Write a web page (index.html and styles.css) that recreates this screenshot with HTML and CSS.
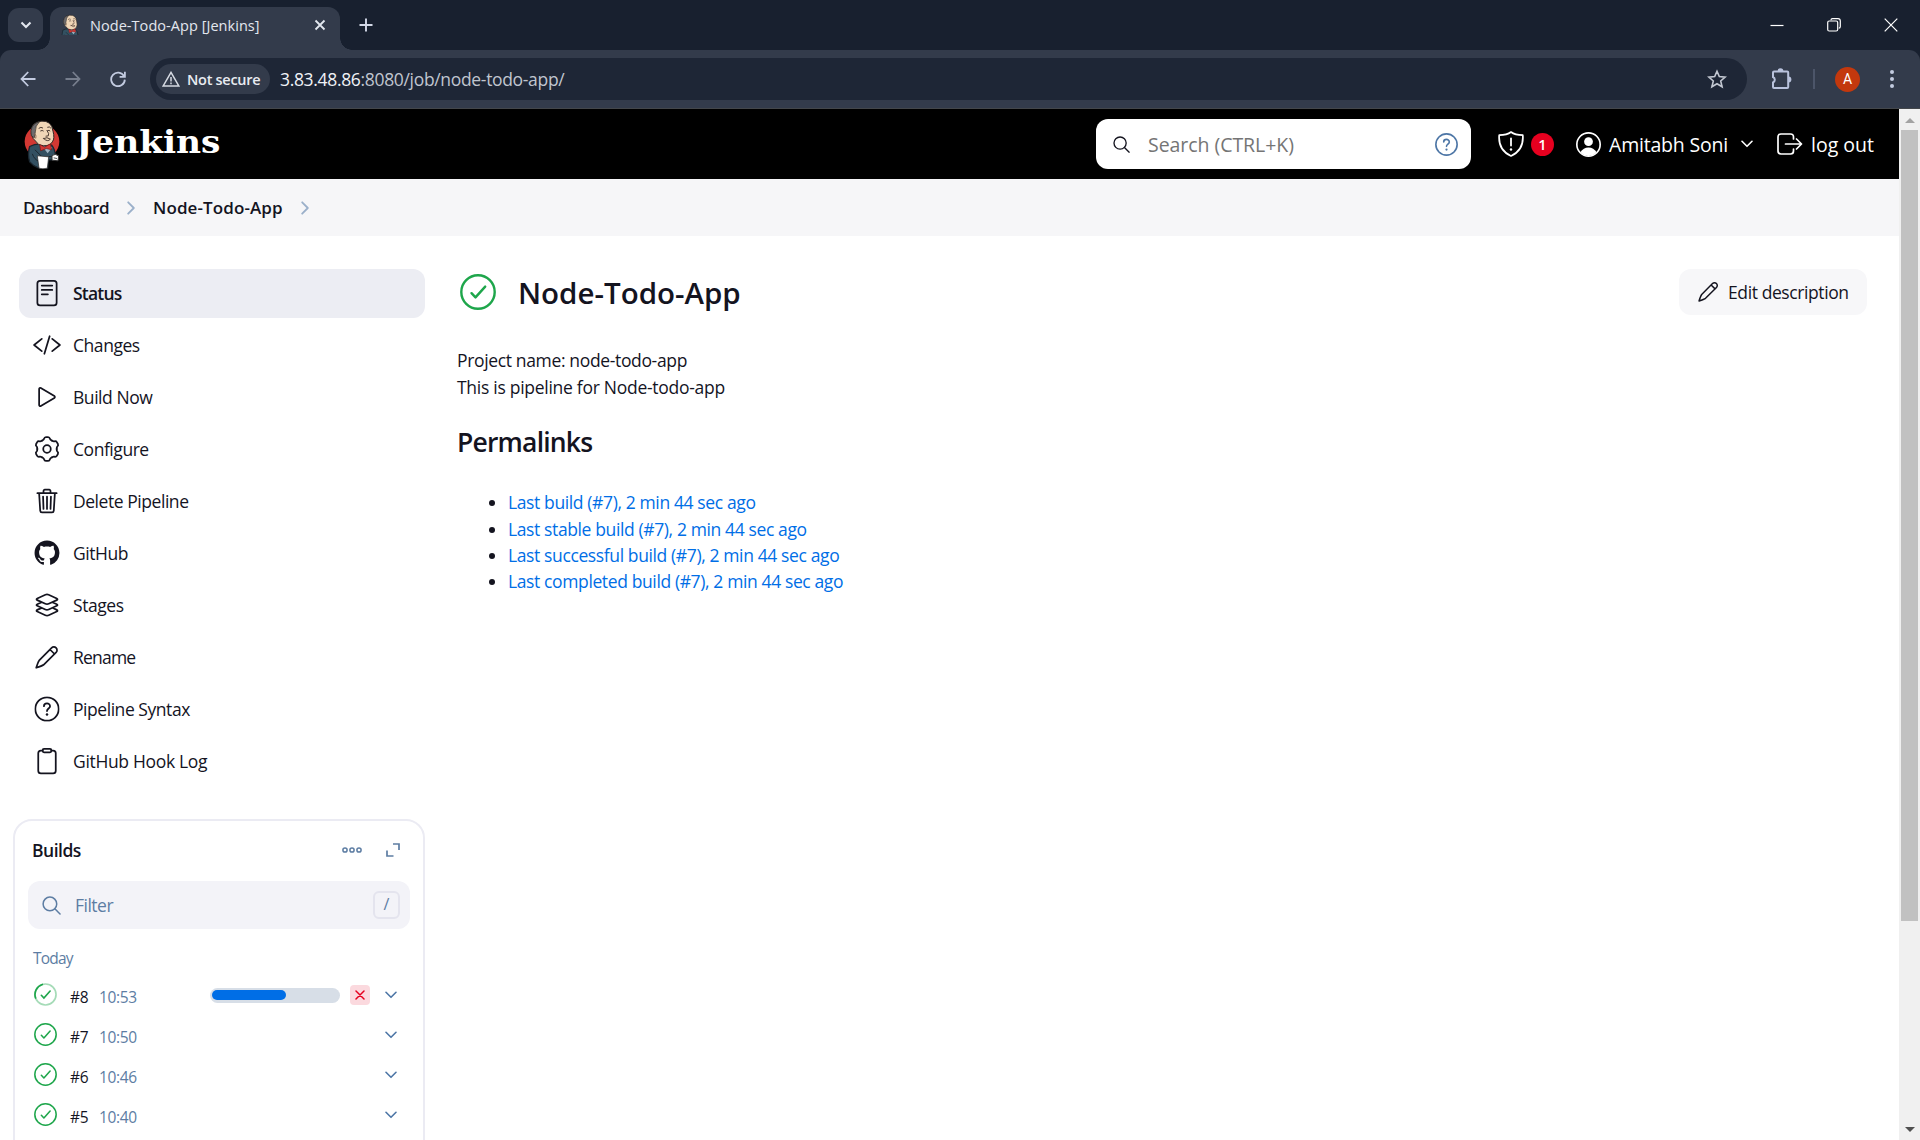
FILE: index.html
```html
<!DOCTYPE html>
<html lang="en">
<head>
<meta charset="utf-8">
<title>Node-Todo-App [Jenkins]</title>
<link rel="stylesheet" href="styles.css">
</head>
<body>
<svg class="defs" width="0" height="0" aria-hidden="true">
  <symbol id="butler" viewBox="0 0 114 152">
    <ellipse class="halo" cx="57" cy="67" rx="52" ry="50"/>
    <path d="M20 82 Q34 74 50 74 L86 78 Q96 90 97 110 L94 122 76 122 74 146 46 146 Q30 140 20 128 Q13 104 20 82z" fill="#335061" stroke="#1b2730" stroke-width="4"/>
    <path d="M25 44 Q22 10 54 6 Q86 3 90 36 Q96 58 88 68 Q82 80 62 80 Q44 79 38 66 Q30 62 25 44z" fill="#f0d6b7" stroke="#2b2523" stroke-width="3"/>
    <path d="M25 50 Q18 16 50 7 Q36 20 37 38 L34 56z" fill="#6d6b6d" stroke="#2b2523" stroke-width="2"/>
    <path d="M48 27q6-5 11-1M74 24q6-3 9 2M53 35q5-3 8 0M74 34q5-2 7 1M72 34q8 10 4 16l-7 1M62 58q10-6 20 2-8 10-20-2z" fill="none" stroke="#4a3a32" stroke-width="3" stroke-linecap="round"/>
    <path d="M33 44q8 0 5 14" fill="none" stroke="#8a6d58" stroke-width="3"/>
    <path d="M58 82l16 20 14-18z" fill="#9fb4c4"/>
    <path d="M50 76l15 8 17-10 4 18-16-4-17 7z" fill="#d33833" stroke="#7c1512" stroke-width="2"/>
    <path d="M36 92l20 20h34M28 104q6 18 20 22" fill="none" stroke="#1b2730" stroke-width="3"/>
    <path d="M43 110l34 3-4 34q-14 4-25 0z" fill="#fff" stroke="#222" stroke-width="2"/>
    <path d="M87 109q10-7 20 1l-2 15-18-2z" fill="#fff" stroke="#333" stroke-width="3"/>
    <path d="M92 116l10 2" stroke="#555" stroke-width="3"/>
  </symbol>
  <symbol id="search" viewBox="0 0 24 24"><g fill="none" stroke="currentColor" stroke-width="1.9" stroke-linecap="round"><circle cx="10" cy="10" r="8.6"/><path d="M16.2 16.2 22.8 22.8"/></g></symbol>
  <symbol id="pencil" viewBox="0 0 24 24"><g fill="none" stroke="currentColor" stroke-width="1.7" stroke-linejoin="round" stroke-linecap="round"><path d="M16.6 2.9 4.2 15.4Q3 17 1.2 22.8 7 21 8.6 19.8L21.1 7.4a3.15 3.15 0 0 0-4.5-4.5zM15 4.5 19.5 9"/></g></symbol>
  <symbol id="help" viewBox="0 0 24 24"><g fill="none" stroke="currentColor" stroke-width="1.7" stroke-linecap="round"><circle cx="12" cy="12" r="11.1"/><path d="M9.100 9.300c0-3.500 5.800-3.500 5.800 0 0 2.200-2.900 2.300-2.900 4.600"/></g><circle cx="12" cy="17.3" r="1.2" fill="currentColor"/></symbol>
  <symbol id="check" viewBox="0 0 36 36"><g fill="none" stroke="currentColor" stroke-width="2.4" stroke-linecap="round" stroke-linejoin="round"><circle cx="18" cy="18" r="16.7"/><path d="M11.5 19.2l4 4.2L25.2 12.6"/></g></symbol>
  <symbol id="chevron" viewBox="0 0 12 8"><path d="M1 1.3l5 5 5-5" fill="none" stroke="currentColor" stroke-width="1.6" stroke-linecap="round" stroke-linejoin="round"/></symbol>
  <symbol id="crumb" viewBox="0 0 8 16"><path d="M1.2 2.300 6.800 8l-5.600 5.700" fill="none" stroke="currentColor" stroke-width="1.8" stroke-linecap="round" stroke-linejoin="round"/></symbol>
</svg>

<div class="titlebar">
  <button class="tab-search"><svg width="12" height="8" viewBox="0 0 12 8"><path d="M1.500 1.500 6 6l4.500-4.500" fill="none" stroke="currentColor" stroke-width="2.100"/></svg></button>
  <div class="tab">
    <svg class="favicon" viewBox="14 0 90 106"><use href="#butler" width="114" height="152"/></svg>
    <span class="tab-title">Node-Todo-App [Jenkins]</span>
    <svg class="tab-close" viewBox="0 0 12 12"><path d="M1.5 1.5l9 9M10.500 1.500l-9 9" stroke="currentColor" stroke-width="1.8"/></svg>
  </div>
  <svg class="tab-new" viewBox="0 0 14 14"><path d="M7 .5v13M.5 7h13" stroke="currentColor" stroke-width="1.9"/></svg>
  <div class="window-controls">
    <svg width="14" height="14"><path d="M.5 7.500h13" stroke="#fff" stroke-width="1.200"/></svg>
    <svg width="14" height="14"><path d="M4 2.200V2q0-1.300 1.500-1.300h5.500q2.300 0 2.300 2.300v5.500q0 1.700-1.500 1.700" fill="none" stroke="#fff" stroke-width="1.200"/><rect x=".7" y="3" width="10" height="10" rx="1.500" fill="none" stroke="#fff" stroke-width="1.200"/></svg>
    <svg width="14" height="14"><path d="M.7.7l12.600 12.600M13.300.7.7 13.300" stroke="#fff" stroke-width="1.200"/></svg>
  </div>
</div>

<div class="toolbar-wrap">
<div class="toolbar">
  <svg class="nav" viewBox="0 0 16 16"><path d="M8.200 1 1.500 8l6.700 7M1.500 8h14" /></svg>
  <svg class="nav nav-off" viewBox="0 0 16 16"><path d="M7.800 1l6.700 7-6.700 7M14.500 8H.500"/></svg>
  <svg class="nav" viewBox="0 0 16 16"><path d="M14 5.200A6.800 6.800 0 1 0 14.800 8.600M14.900.8v5H9.600"/></svg>
  <div class="omnibox">
    <div class="security">
      <svg width="18" height="16" viewBox="0 0 18 16"><path d="M9 1.400 16.800 15H1.200z" fill="none" stroke="#d6dae2" stroke-width="1.500"/><path d="M9 6v4.500M9 11.600v1.600" stroke="#d6dae2" stroke-width="1.500"/></svg>
      <span>Not secure</span>
    </div>
    <span class="url"><b>3.83.48.86</b>:8080/job/node-todo-app/</span>
    <svg class="star" viewBox="0 0 20 20"><path d="M10 2.200l2.300 5.400 5.900.5-4.500 3.900 1.400 5.800L10 14.700l-5.100 3.100 1.400-5.800L1.800 8.100l5.900-.5z" fill="none" stroke="#c3c8d2" stroke-width="1.600"/></svg>
  </div>
  <svg class="puzzle" viewBox="0 0 22 22"><path d="M2 4.500q0-1 1-1H16.200q1 0 1 1V19q0 1-1 1H3q-1 0-1-1v-4.500a3 3 0 0 0 0-5.500z" fill="none" stroke="#b9c2dc" stroke-width="2"/><path d="M6.600 3.200a2.900 2.900 0 0 1 5.800 0zM17.500 8.600a2.900 2.900 0 0 1 0 5.800z" fill="#b9c2dc"/></svg>
  <span class="divider"></span>
  <span class="avatar">A</span>
  <svg class="kebab" viewBox="0 0 4 20" fill="#c3cbe0"><circle cx="2" cy="3" r="2"/><circle cx="2" cy="10" r="2"/><circle cx="2" cy="17" r="2"/></svg>
</div>
</div>

<div class="viewport">
<div class="page">
  <header class="header">
    <svg class="logo"><use href="#butler"/></svg>
    <div class="brand"><span class="wordmark">Jenkins</span></div>
    <div class="search">
      <svg class="search-icon"><use href="#search"/></svg>
      <span class="search-hint">Search (CTRL+K)</span>
      <svg class="search-help"><use href="#help"/></svg>
    </div>
    <svg class="shield" viewBox="0 0 26 26"><path d="M13 1Q9 4 1.200 4.200 0 19 13 25 26 19 24.800 4.200 17 4 13 1z" fill="none" stroke="#fff" stroke-width="1.700" stroke-linejoin="round"/><path d="M13 7.500v7" stroke="#fff" stroke-width="1.800" stroke-linecap="round"/><circle cx="13" cy="18.500" r="1.200" fill="#fff"/></svg>
    <span class="badge">1</span>
    <svg class="user" viewBox="0 0 24 24"><circle cx="12" cy="12" r="11.200" fill="none" stroke="#fff" stroke-width="1.600"/><circle cx="12" cy="9.300" r="4.200" fill="#fff"/><path d="M4.300 19.300Q7 14.800 12 14.800t7.700 4.500Q17 23 12 23t-7.700-3.700z" fill="#fff"/></svg>
    <span class="username">Amitabh Soni</span>
    <svg class="user-chevron"><use href="#chevron"/></svg>
    <svg class="exit" viewBox="0 0 26 22"><path d="M16.500 6V4q0-3-3-3H4Q1 1 1 4v14q0 3 3 3h9.500q3 0 3-3v-2M8.500 11H24M19.500 6l5 5-5 5" fill="none" stroke="#fff" stroke-width="1.700" stroke-linecap="round" stroke-linejoin="round"/></svg>
    <span class="logout">log out</span>
  </header>

  <nav class="breadcrumbs">
    <span class="crumb-1">Dashboard</span><svg><use href="#crumb"/></svg>
    <span class="crumb-2">Node-Todo-App</span><svg><use href="#crumb"/></svg>
  </nav>

  <div class="body">
    <aside class="side">
      <div class="tasks">
        <a class="task active"><svg viewBox="0 0 512 512"><rect x="80" y="32" width="352" height="448" rx="48"/><path d="M160 120h192M160 200h192M160 280h112"/></svg><span>Status</span></a>
        <a class="task"><svg viewBox="0 0 512 512"><path d="M160 368 20 256l140-112M352 368l140-112-140-112M304 96l-96 320"/></svg><span>Changes</span></a>
        <a class="task"><svg viewBox="0 0 512 512"><path d="M112 111v290c0 17.440 17 28.520 31 20.160l247.900-148.370c12.120-7.250 12.120-26.330 0-33.580L143 90.840c-14-8.360-31 2.720-31 20.160z"/></svg><span>Build Now</span></a>
        <a class="task"><svg class="gear" viewBox="-1 -1 26 26"><circle cx="12" cy="12" r="3.500"/><path id="tooth" d="M7.500 4.200C8.300 3.750 8.900 3.500 9.200 2.600Q9.600.9 11 .9h2Q14.400.9 14.800 2.600C15.100 3.500 15.700 3.750 16.500 4.200"/><use href="#tooth" transform="rotate(60 12 12)"/><use href="#tooth" transform="rotate(120 12 12)"/><use href="#tooth" transform="rotate(180 12 12)"/><use href="#tooth" transform="rotate(240 12 12)"/><use href="#tooth" transform="rotate(300 12 12)"/></svg><span>Configure</span></a>
        <a class="task"><svg viewBox="0 0 512 512"><path d="M112 112l20 320c.95 18.490 14.400 32 32 32h184c17.670 0 30.870-13.510 32-32l20-320M80 112h352M192 112V72a23.930 23.930 0 0 1 24-24h80a23.930 23.930 0 0 1 24 24v40M256 176v224M184 176l8 224M328 176l-8 224"/></svg><span>Delete Pipeline</span></a>
        <a class="task"><svg class="github" viewBox="-1 -1 18 18"><path d="M8 0C3.580 0 0 3.580 0 8c0 3.540 2.290 6.530 5.470 7.590.4.070.55-.17.55-.38 0-.19-.01-.82-.01-1.490-2.010.37-2.530-.49-2.690-.94-.09-.23-.48-.94-.82-1.130-.28-.15-.68-.52-.01-.53.63-.01 1.080.58 1.230.82.720 1.210 1.870.87 2.330.66.070-.52.280-.87.510-1.070-1.780-.2-3.640-.89-3.640-3.950 0-.87.310-1.590.82-2.150-.08-.2-.36-1.020.08-2.120 0 0 .67-.21 2.200.82.640-.18 1.320-.27 2-.27s1.360.09 2 .27c1.530-1.040 2.200-.82 2.200-.82.440 1.100.160 1.920.080 2.120.51.56.82 1.270.82 2.150 0 3.070-1.870 3.750-3.650 3.950.29.25.54.73.54 1.480 0 1.070-.01 1.930-.01 2.200 0 .21.15.46.55.38A8.010 8.010 0 0 0 16 8c0-4.420-3.580-8-8-8z"/></svg><span>GitHub</span></a>
        <a class="task"><svg viewBox="0 0 512 512"><path d="M434.800 137.650l-149.360-68.100c-16.190-7.400-42.690-7.400-58.880 0L77.300 137.650c-17.600 8-17.600 21.090 0 29.090l148 67.500c16.890 7.700 44.690 7.700 61.580 0l148-67.500c17.520-8 17.520-21.100-.08-29.090zM160 308.520l-82.700 37.110c-17.600 8-17.600 21.100 0 29.100l148 67.500c16.890 7.690 44.690 7.690 61.580 0l148-67.500c17.600-8 17.600-21.100 0-29.100l-79.940-38.470M160 204.480l-82.800 37.160c-17.600 8-17.600 21.100 0 29.100l148 67.490c16.890 7.700 44.690 7.700 61.580 0l148-67.490c17.700-8 17.700-21.100.1-29.100L352 204.480"/></svg><span>Stages</span></a>
        <a class="task"><svg class="plain" viewBox="-2 -2 28 28"><use href="#pencil" width="24" height="24"/></svg><span class="tight">Rename</span></a>
        <a class="task"><svg class="plain" viewBox="-1.300 -1.300 26.600 26.600"><use href="#help" width="24" height="24"/></svg><span>Pipeline Syntax</span></a>
        <a class="task"><svg viewBox="0 0 512 512"><path d="M336 64h32a48 48 0 0 1 48 48v320a48 48 0 0 1-48 48H144a48 48 0 0 1-48-48V112a48 48 0 0 1 48-48h32"/><rect x="176" y="32" width="160" height="64" rx="26"/></svg><span class="loose">GitHub Hook Log</span></a>
      </div>

      <section class="builds">
        <div class="builds-head">
          <h2>Builds</h2>
          <svg class="dots" viewBox="0 0 20 6"><g fill="none" stroke="currentColor" stroke-width="1.500"><circle cx="3" cy="3" r="2.100"/><circle cx="10" cy="3" r="2.100"/><circle cx="17" cy="3" r="2.100"/></g></svg>
          <svg class="expand" viewBox="0 0 14 14"><path d="M7 1h6v6M1 7.500V13h6.500" fill="none" stroke="currentColor" stroke-width="1.700"/></svg>
        </div>
        <div class="filter">
          <svg><use href="#search"/></svg>
          <span>Filter</span>
          <kbd>/</kbd>
        </div>
        <div class="day">Today</div>
        <div class="build">
          <svg class="state" viewBox="0 0 36 36"><g fill="none" stroke="currentColor" stroke-width="2.600" stroke-linecap="round"><circle cx="18" cy="18" r="16.500" opacity=".4"/><path d="M2.500 23.500A16.500 16.500 0 0 1 13 2.300"/><path d="M11.500 19.200l4 4.200L25.200 12.600"/></g></svg>
          <span class="num">#8</span><span class="time">10:53</span>
          <span class="progress"><i></i></span>
          <span class="stop"><svg viewBox="0 0 10 10"><path d="M1 1l8 8M9 1 1 9" stroke="#e6001f" stroke-width="1.500" stroke-linecap="round"/></svg></span>
          <svg class="more"><use href="#chevron"/></svg>
        </div>
        <div class="build"><svg class="state"><use href="#check"/></svg><span class="num">#7</span><span class="time">10:50</span><svg class="more"><use href="#chevron"/></svg></div>
        <div class="build"><svg class="state"><use href="#check"/></svg><span class="num">#6</span><span class="time">10:46</span><svg class="more"><use href="#chevron"/></svg></div>
        <div class="build"><svg class="state"><use href="#check"/></svg><span class="num">#5</span><span class="time">10:40</span><svg class="more"><use href="#chevron"/></svg></div>
      </section>
    </aside>

    <main class="main">
      <div class="main-head">
        <svg class="status-icon"><use href="#check"/></svg>
        <h1>Node-Todo-App</h1>
        <button class="edit"><svg><use href="#pencil"/></svg><span>Edit description</span></button>
      </div>
      <p class="desc"><span class="tight">Project name: node-todo-app</span><br>This is pipeline for Node-todo-app</p>
      <h2 class="permalinks">Permalinks</h2>
      <ul class="links">
        <li><a>Last build (#7), 2 min 44 sec ago</a></li>
        <li><a>Last stable build (#7), 2 min 44 sec ago</a></li>
        <li><a>Last successful build (#7), 2 min 44 sec ago</a></li>
        <li><a>Last completed build (#7), 2 min 44 sec ago</a></li>
      </ul>
    </main>
  </div>
</div>
<div class="scrollbar">
  <svg class="up" viewBox="0 0 10 5"><path d="M0 5 5 0l5 5z" fill="#a3a3a3"/></svg>
  <div class="thumb"></div>
  <svg class="down" viewBox="0 0 10 5"><path d="M0 0l5 5 5-5z" fill="#505050"/></svg>
</div>
</div>
</body>
</html>
```
FILE: styles.css
```css
* { box-sizing: border-box; }
body {
  margin: 0;
  width: 1920px;
  height: 1140px;
  overflow: hidden;
  display: flex;
  flex-direction: column;
  background: #fff;
  color: #14141f;
  font-family: "Open Sans", "Noto Sans", sans-serif;
  font-size: 17.5px;
  white-space: nowrap;
}
svg { display: block; flex: none; }
.defs { position: absolute; }
h1, h2, p, ul { margin: 0; padding: 0; }
button { border: 0; padding: 0; font: inherit; color: inherit; }

/* Browser chrome */
.titlebar { height: 50px; flex: none; background: #18202f; display: flex; align-items: flex-end; padding-left: 8px; }
.tab-search { width: 35px; height: 34px; margin-bottom: 8px; border-radius: 11px; background: #333b4b; color: #e3e7ef; display: grid; place-items: center; }
.tab {
  position: relative;
  width: 290px; height: 43px; margin-left: 7px; padding: 0 14px 7px 11px;
  display: flex; align-items: center;
  background: #333b4b; border-radius: 12px 12px 0 0; color: #e3e7ef;
}
.tab::before, .tab::after { content: ""; position: absolute; bottom: 0; width: 12px; height: 12px; }
.tab::before { left: -12px; background: radial-gradient(circle at 0 0, transparent 11.500px, #333b4b 12px); }
.tab::after { right: -12px; background: radial-gradient(circle at 100% 0, transparent 11.500px, #333b4b 12px); }
.halo { fill: var(--halo, #d33833); }
.favicon { --halo: transparent; width: 19px; height: 21px; margin-top: -2px; }
.tab-title { margin-left: 10px; font-size: 14.500px; letter-spacing: 0.05px; flex: 1; }
.tab-close { width: 12px; height: 12px; }
.tab-new { width: 14px; height: 14px; margin: 0 0 18px 19px; color: #d3d9e8; }
.window-controls { display: flex; gap: 43px; margin: 0 22px 18px auto; }

.toolbar-wrap { background: #18202f; flex: none; }
.toolbar { height: 59px; background: #333b4b; border-radius: 11px 11px 0 0; box-shadow: inset 0 -1px #44474b; display: flex; align-items: center; padding: 0 25px 1px 20px; }
.nav { width: 16px; height: 16px; margin-right: 29px; fill: none; stroke: #c3cbe0; stroke-width: 1.8; }
.nav-off { stroke: #777e8d; }
.omnibox { width: 1597px; height: 42px; margin-left: -5px; border-radius: 21px; background: #1e2636; display: flex; align-items: center; padding: 0 20px 0 6px; }
.security { width: 114px; height: 30px; border-radius: 15px; background: #333b4b; display: flex; align-items: center; gap: 7px; padding-left: 6px; color: #e8ebf1; font-size: 14.500px; font-weight: 600; letter-spacing: -0.28px; }
.url { margin-left: 10px; flex: 1; color: #c0c5cf; font-size: 17.500px; letter-spacing: -0.33px; }
.url b { font-weight: 400; color: #f0f2f6; }
.star { width: 20px; height: 20px; }
.puzzle { width: 22px; height: 22px; margin-left: 24px; }
.divider { width: 2px; height: 20px; margin-left: 20px; background: #4c5569; }
.avatar { width: 25px; height: 25px; margin-left: 20px; border-radius: 50%; background: #c3380d; color: #fff; font: 14px/25px Roboto, sans-serif; text-align: center; }
.kebab { width: 4px; height: 20px; margin-left: 30px; }

/* Page */
.viewport { flex: 1; min-height: 0; display: flex; }
.page { width: 1899px; overflow: hidden; }
.header { height: 70px; background: #000; color: #fff; display: flex; align-items: center; padding-left: 23px; font-size: 19.500px; }
.logo { width: 38px; height: 51px; }
.brand { width: 1020px; margin-left: 15px; padding-bottom: 4px; }
.wordmark { display: inline-block; font: bold 32px "DejaVu Serif", serif; transform: scaleX(1.075); transform-origin: 0 50%; }
.search { width: 375px; height: 50px; border-radius: 12px; background: #fff; display: flex; align-items: center; padding: 0 13px 0 17px; color: #757575; }
.search-icon { width: 17px; height: 17px; color: #14141f; }
.search-hint { flex: 1; margin-left: 18px; letter-spacing: -0.05px; }
.search-help { width: 23px; height: 23px; color: #4d76a6; }
.shield { width: 26px; height: 26px; margin-left: 27px; }
.badge { width: 23px; height: 23px; margin-left: 7px; border-radius: 50%; background: #e6001f; font-size: 14.500px; font-weight: 600; line-height: 23px; text-align: center; }
.user { width: 25px; height: 25px; margin-left: 22px; }
.username { width: 132px; margin-left: 8px; letter-spacing: -0.2px; }
.user-chevron { width: 12px; height: 8px; }
.exit { width: 26px; height: 22px; margin-left: 24px; }
.logout { margin-left: 8px; }

.breadcrumbs { height: 57px; background: #f6f6f8; display: flex; align-items: center; padding-left: 23px; font-weight: 600; font-size: 17px; letter-spacing: -0.45px; }
.breadcrumbs svg { width: 8px; height: 16px; color: #9bb0ca; }
.crumb-1 { width: 104px; }
.crumb-2 { width: 148px; margin-left: 18px; letter-spacing: 0.1px; }

.body { display: flex; }
.side { width: 457px; padding: 33px 0 0 13px; }
.tasks { padding-left: 6px; display: flex; flex-direction: column; gap: 3px; }
.task { width: 406px; height: 49px; border-radius: 12px; display: flex; align-items: center; gap: 12px; padding: 0 0 1px 14px; letter-spacing: -0.45px; }
.task svg { width: 28px; height: 28px; margin-left: -.3px; margin-right: .3px; fill: none; stroke: currentColor; stroke-width: 32; stroke-linecap: round; stroke-linejoin: round; }
.task .gear { stroke-width: 1.650; }
.task .github { fill: currentColor; stroke: none; }
.task .plain { stroke: none; }
.task .tight { letter-spacing: -0.8px; }
.task .loose { letter-spacing: -0.33px; }
.active { background: #ecedf3; font-weight: 600; letter-spacing: -0.8px; }

.builds { width: 412px; height: 400px; margin-top: 33px; border: 2px solid #ebebf3; border-radius: 19px; padding: 0 13px; }
.builds-head { height: 60px; display: flex; align-items: center; padding: 0 10px 2px 4px; color: #5d7da3; }
.builds-head h2 { flex: 1; color: #14141f; font-size: 17.500px; font-weight: 600; letter-spacing: -0.5px; }
.dots { width: 20px; height: 6px; }
.expand { width: 14px; height: 14px; margin-left: 24px; }
.filter { width: 382px; height: 48px; border-radius: 12px; background: #f3f3f8; color: #5d7da3; display: flex; align-items: center; padding: 0 10px 0 14px; }
.filter svg { width: 19px; height: 19px; }
.filter span { flex: 1; margin-left: 14px; letter-spacing: -0.5px; }
.filter kbd { width: 27px; height: 28px; border: 2px solid #e4e4ee; border-radius: 6px; font: 16px/23px "Open Sans", sans-serif; text-align: center; }
.day { margin: 19px 0 6px 5px; font-size: 15.500px; line-height: 21px; height: 21px; color: #5d7da3; letter-spacing: -0.8px; }
.build { height: 40px; display: flex; align-items: center; padding: 0 13px 0 6px; font-size: 15.500px; }
.state { width: 23px; height: 23px; margin-top: -2px; color: #1ea64b; }
.num { width: 29px; margin: 4px 0 0 13px; letter-spacing: -0.3px; }
.time { margin-top: 4px; color: #5d7da3; letter-spacing: -0.35px; flex: 1; }
.progress { width: 130px; height: 15px; border-radius: 8px; background: #d7dee7; padding: 2px; }
.progress i { display: block; width: 74px; height: 10px; border-radius: 5px; background: #006ee6; }
.stop { width: 20px; height: 20px; margin: 0 15px 0 10px; border-radius: 4px; background: #fbd9de; display: grid; place-items: center; }
.stop svg { width: 10px; height: 10px; }
.more { width: 12px; height: 8px; color: #4d76a6; }

.main { flex: 1; padding: 33px 32px 0 0; }
.main-head { display: flex; align-items: center; height: 46px; }
.status-icon { width: 36px; height: 36px; margin-left: 3px; color: #1ea64b; }
h1 { flex: 1; margin-left: 22px; font-size: 29.500px; font-weight: 600; letter-spacing: 0; }
.edit { width: 188px; height: 46px; border-radius: 12px; background: #f7f7f9; display: flex; align-items: center; padding-left: 19px; }
.edit svg { width: 21px; height: 21px; margin-top: -2px; }
.edit span { margin-left: 9px; letter-spacing: -0.4px; }
.desc { margin-top: 32px; line-height: 26.600px; letter-spacing: -0.28px; }
.desc .tight { letter-spacing: -0.35px; }
.permalinks { margin-top: 24px; font-size: 26.500px; line-height: 36px; font-weight: 600; letter-spacing: -0.8px; }
.links { margin-top: 29px; padding-left: 51px; line-height: 26.400px; letter-spacing: -0.38px; }
.links a { color: #006ee6; }

.scrollbar { width: 21px; background: #f0f0f0; display: flex; flex-direction: column; align-items: center; }
.scrollbar svg { width: 10px; height: 5px; }
.up { margin-top: 9px; }
.thumb { width: 17px; height: 791px; margin-top: 7px; background: #c1c1c1; }
.down { margin: auto 0 8px; }
```
